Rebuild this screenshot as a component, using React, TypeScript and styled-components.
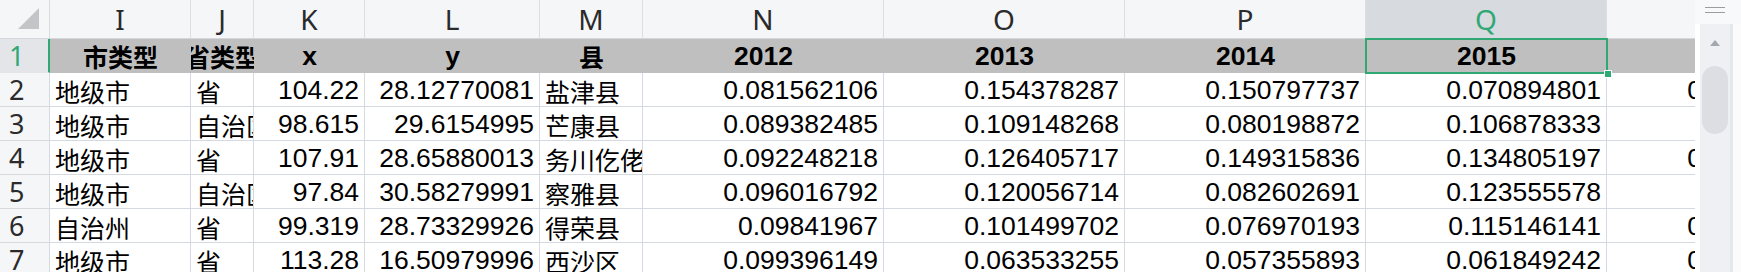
import React from "react";
import styled, { createGlobalStyle, css } from "styled-components";

const GlobalStyle = createGlobalStyle`
  html, body { margin: 0; padding: 0; background: #ffffff; }
  body { font-family: "Liberation Sans", "Noto Sans CJK SC", sans-serif; }
`;

const GREEN = "#2fa874";
const GRID = "#d5d9e2";

const COLS = [50, 141, 63, 111, 175, 103, 241, 241, 241, 241, 241];

const Frame = styled.div`
  display: flex;
  width: 1741px;
  height: 272px;
  overflow: hidden;
  background: #ffffff;
`;

const Viewport = styled.div`
  flex: 0 0 1695px;
  width: 1695px;
  height: 272px;
  overflow: hidden;
`;

const Grid = styled.div`
  display: grid;
  grid-template-columns: ${COLS.map((c) => `${c}px`).join(" ")};
  grid-template-rows: 39px repeat(7, 34px);
  width: ${COLS.reduce((a, b) => a + b, 0)}px;
`;

const Corner = styled.div`
  box-sizing: border-box;
  background: #f5f6f8;
  border-right: 1px solid #d9dbe0;
  border-bottom: 1px solid #d5d7dc;
  display: flex;
  align-items: flex-start;
  justify-content: flex-end;
  padding: 8px 10px 0 0;
`;

const ColHeader = styled.div<{ $selected?: boolean }>`
  box-sizing: border-box;
  display: flex;
  align-items: center;
  justify-content: center;
  background: ${(p) => (p.$selected ? "#d7dadf" : "#f5f6f8")};
  border-right: 1px solid #dcdee2;
  border-bottom: 1px solid #d5d7dc;
  font-family: "Noto Sans", "Open Sans", sans-serif;
  font-size: 28px;
  line-height: 1;
  color: ${(p) => (p.$selected ? GREEN : "#2b2b2b")};
  overflow: hidden;
`;

const RowHeader = styled.div<{ $selected?: boolean }>`
  box-sizing: border-box;
  display: flex;
  align-items: center;
  padding-left: 9px;
  background: ${(p) => (p.$selected ? "#e3e5e9" : "#f5f6f8")};
  border-right: ${(p) => (p.$selected ? `2px solid ${GREEN}` : `1px solid ${GRID}`)};
  border-bottom: 1px solid ${(p) => (p.$selected ? "#e3e5e9" : "#d7d9de")};
  font-family: "Noto Sans", "Open Sans", sans-serif;
  font-size: 27px;
  line-height: 1;
  color: ${(p) => (p.$selected ? GREEN : "#2b2b2b")};
`;

type Align = "left" | "right" | "center";

const Cell = styled.div<{
  $align: Align;
  $title?: boolean;
  $cjk?: boolean;
  $selected?: boolean;
}>`
  position: relative;
  box-sizing: border-box;
  display: flex;
  align-items: center;
  justify-content: ${(p) =>
    p.$align === "right" ? "flex-end" : p.$align === "center" ? "center" : "flex-start"};
  padding: 2px 5px 0 5px;
  white-space: nowrap;
  overflow: hidden;
  font-size: ${(p) => (p.$cjk ? "25px" : "26.5px")};
  color: #000000;
  ${(p) =>
    p.$title
      ? css`
          background: #bfbfbf;
          font-weight: 700;
          padding-top: 0;
        `
      : css`
          background: #ffffff;
          border-right: 1px solid ${GRID};
          border-bottom: 1px solid ${GRID};
        `}
  ${(p) =>
    p.$selected &&
    css`
      overflow: visible;
      z-index: 2;
      outline: 2px solid ${GREEN};
      outline-offset: -1px;
    `}
`;

const CellText = styled.span`
  display: block;
  flex: 0 0 auto;
`;

const FillHandle = styled.span`
  position: absolute;
  right: -4px;
  bottom: -4px;
  width: 6px;
  height: 6px;
  background: ${GREEN};
  border: 1px solid #ffffff;
  box-sizing: content-box;
  margin: -1px;
`;

const ScrollPanel = styled.div`
  flex: 0 0 46px;
  display: flex;
  flex-direction: column;
  background: #ffffff;
`;

const ScrollTop = styled.div`
  height: 24px;
  flex: 0 0 24px;
  display: flex;
  align-items: flex-start;
  padding: 6px 0 0 10px;
  box-sizing: border-box;
  background: #f8f9fa;
`;

const ScrollBody = styled.div`
  flex: 1;
  display: flex;
`;

const Track = styled.div`
  margin-left: 5px;
  width: 30px;
  background: #eff0f3;
  border-right: 3px solid #e6e7ea;
  display: flex;
  flex-direction: column;
  align-items: center;
  padding-top: 16px;
  box-sizing: content-box;
`;

const Thumb = styled.div`
  margin-top: 20px;
  width: 26px;
  height: 68px;
  border-radius: 13px;
  background: #dcdee3;
`;

const ScrollRest = styled.div`
  flex: 1;
  background: #fbfbfc;
`;

type CellDef = { t: string; a: Align; cjk?: boolean };

const L = (t: string): CellDef => ({ t, a: "left", cjk: true });
const R = (t: string): CellDef => ({ t, a: "right" });

const letters = ["I", "J", "K", "L", "M", "N", "O", "P", "Q", "R"];

const titleRow: CellDef[] = [
  { t: "市类型", a: "center", cjk: true },
  { t: "省类型", a: "center", cjk: true },
  { t: "x", a: "center" },
  { t: "y", a: "center" },
  { t: "县", a: "center", cjk: true },
  { t: "2012", a: "center" },
  { t: "2013", a: "center" },
  { t: "2014", a: "center" },
  { t: "2015", a: "center" },
  { t: "2016", a: "center" },
];

const dataRows: CellDef[][] = [
  [L("地级市"), L("省"), R("104.22"), R("28.12770081"), L("盐津县"), R("0.081562106"), R("0.154378287"), R("0.150797737"), R("0.070894801"), R("0.083415562")],
  [L("地级市"), L("自治区"), R("98.615"), R("29.6154995"), L("芒康县"), R("0.089382485"), R("0.109148268"), R("0.080198872"), R("0.106878333"), R("0.12345678")],
  [L("地级市"), L("省"), R("107.91"), R("28.65880013"), L("务川仡佬族苗族自治县"), R("0.092248218"), R("0.126405717"), R("0.149315836"), R("0.134805197"), R("0.095271346")],
  [L("地级市"), L("自治区"), R("97.84"), R("30.58279991"), L("察雅县"), R("0.096016792"), R("0.120056714"), R("0.082602691"), R("0.123555578"), R("0.11482639")],
  [L("自治州"), L("省"), R("99.319"), R("28.73329926"), L("得荣县"), R("0.09841967"), R("0.101499702"), R("0.076970193"), R("0.115146141"), R("0.087301254")],
  [L("地级市"), L("省"), R("113.28"), R("16.50979996"), L("西沙区"), R("0.099396149"), R("0.063533255"), R("0.057355893"), R("0.061849242"), R("0.072918364")],
];

const SELECTED_COL = 8; // Q

export default function App() {
  return (
    <>
      <GlobalStyle />
      <Frame>
        <Viewport>
          <Grid>
            <Corner>
              <svg width="21" height="21" viewBox="0 0 21 21">
                <polygon points="21,0 21,21 0,21" fill="#c3c5c9" />
              </svg>
            </Corner>
            {letters.map((l, i) => (
              <ColHeader key={l} $selected={i === SELECTED_COL}>
                {l}
              </ColHeader>
            ))}

            <RowHeader $selected>1</RowHeader>
            {titleRow.map((c, i) => (
              <Cell key={`t${i}`} $align={c.a} $title $cjk={c.cjk} $selected={i === SELECTED_COL}>
                <CellText>{c.t}</CellText>
                {i === SELECTED_COL && <FillHandle />}
              </Cell>
            ))}

            {dataRows.map((row, r) => (
              <React.Fragment key={`r${r}`}>
                <RowHeader>{r + 2}</RowHeader>
                {row.map((c, i) => (
                  <Cell key={`c${r}-${i}`} $align={c.a} $cjk={c.cjk}>
                    <CellText>{c.t}</CellText>
                  </Cell>
                ))}
              </React.Fragment>
            ))}
          </Grid>
        </Viewport>
        <ScrollPanel>
          <ScrollTop>
            <svg width="20" height="8" viewBox="0 0 20 8">
              <line x1="0" y1="1.5" x2="20" y2="1.5" stroke="#9b9da1" strokeWidth="1" />
              <line x1="0" y1="6.5" x2="20" y2="6.5" stroke="#9b9da1" strokeWidth="1" />
            </svg>
          </ScrollTop>
          <ScrollBody>
            <Track>
              <svg width="10" height="6" viewBox="0 0 10 6">
                <polygon points="5,0 10,6 0,6" fill="#a3a7ae" />
              </svg>
              <Thumb />
            </Track>
            <ScrollRest />
          </ScrollBody>
        </ScrollPanel>
      </Frame>
    </>
  );
}
